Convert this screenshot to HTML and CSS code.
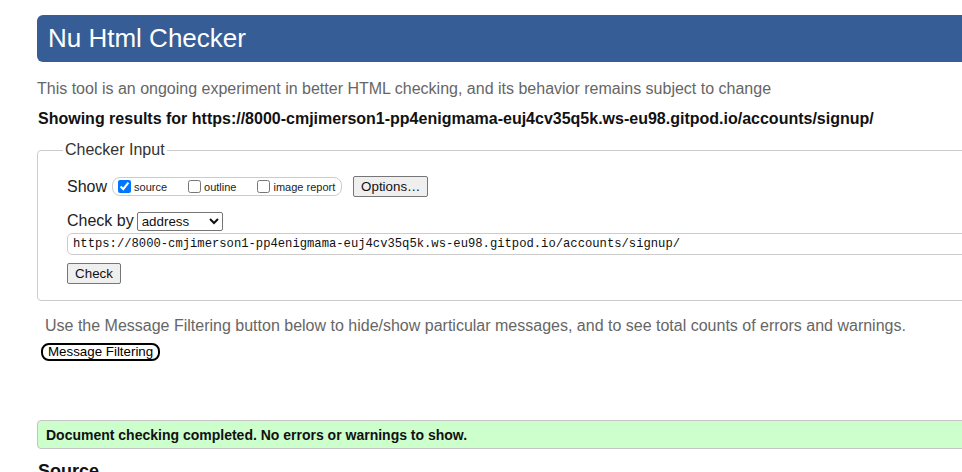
FILE: index.html
```html
<!DOCTYPE html>
<html lang="en">
<head>
<meta charset="utf-8">
<title>Nu Html Checker</title>
<link rel="stylesheet" href="styles.css">
</head>
<body>
<div class="page">
  <h1 class="banner">Nu Html Checker</h1>
  <p class="intro">This tool is an ongoing experiment in better HTML checking, and its behavior remains subject to change</p>
  <p class="results-for">Showing results for https://8000-cmjimerson1-pp4enigmama-euj4cv35q5k.ws-eu98.gitpod.io/accounts/signup/</p>
  <fieldset class="checker">
    <legend class="checker-legend">Checker Input</legend>
    <div class="checker-body">
      <div class="row show-row">
        <span class="label">Show</span>
        <span class="show-box">
          <label class="opt"><input type="checkbox" checked><span>source</span></label>
          <label class="opt"><input type="checkbox"><span>outline</span></label>
          <label class="opt"><input type="checkbox"><span>image report</span></label>
        </span>
        <button class="btn options-btn" type="button">Options…</button>
      </div>
      <div class="row checkby-row">
        <span class="label">Check by</span>
        <select class="checkby-select">
          <option>address</option>
        </select>
      </div>
      <div class="row url-row">
        <input class="url-input" type="text" value="https://8000-cmjimerson1-pp4enigmama-euj4cv35q5k.ws-eu98.gitpod.io/accounts/signup/">
      </div>
      <div class="row submit-row">
        <button class="btn check-btn" type="button">Check</button>
      </div>
    </div>
  </fieldset>
  <p class="filter-note">Use the Message Filtering button below to hide/show particular messages, and to see total counts of errors and warnings.</p>
  <button class="filter-btn" type="button">Message Filtering</button>
  <div class="success">Document checking completed. No errors or warnings to show.</div>
  <h2 class="source-head">Source</h2>
</div>
</body>
</html>
```

FILE: styles.css
```css
html, body {
  margin: 0;
  padding: 0;
  background: #fff;
  overflow: hidden;
}

body {
  font-family: "Liberation Sans", Arial, sans-serif;
  color: #111;
}

.page {
  width: 1060px;
  padding-left: 37px;
  padding-top: 15px;
}

.banner {
  margin: 0;
  height: 47px;
  display: flex;
  align-items: center;
  padding-left: 11px;
  background: #365d95;
  color: #fff;
  font-weight: normal;
  font-size: 26px;
  border-radius: 6px;
}

.intro {
  margin: 17px 0 0 0;
  font-size: 16px;
  line-height: 20px;
  color: #666;
}

.results-for {
  margin: 10px 0 0 1px;
  font-size: 16px;
  line-height: 20px;
  font-weight: bold;
  color: #111;
}

.checker {
  margin: 12px 0 0 0;
  border: 1px solid #ccc;
  border-radius: 4px;
  padding: 17px 0 16px 0;
  min-width: 0;
}

.checker-legend {
  margin-left: 25px;
  padding: 0 2px;
  font-size: 16px;
  line-height: 18px;
  color: #333;
}

.checker-body {
  padding-left: 29px;
}

.row {
  display: flex;
  align-items: center;
}

.label {
  font-size: 16px;
  color: #222;
}

.show-row {
  height: 21px;
}

.show-box {
  display: inline-flex;
  align-items: center;
  height: 17px;
  margin-left: 5px;
  padding: 0 6px 0 1px;
  border: 1px solid #ccc;
  border-radius: 8px;
}

.opt {
  display: inline-flex;
  align-items: center;
  font-size: 11px;
  color: #222;
  margin-right: 17px;
}

.opt:last-child {
  margin-right: 0;
}

.opt input {
  width: 13px;
  height: 13px;
  margin: 0 3px 0 4px;
}

.btn {
  font-family: "Liberation Sans", Arial, sans-serif;
  font-size: 13.33px;
  color: #111;
  background: #efefef;
  border: 1px solid #767676;
  border-radius: 2px;
  padding: 1px 6px;
  height: 21px;
}

.options-btn {
  margin-left: 11px;
  width: 75px;
}

.checkby-row {
  margin-top: 14px;
  height: 20px;
}

.checkby-select {
  margin-left: 3px;
  width: 86px;
  height: 19px;
  font-family: "Liberation Sans", Arial, sans-serif;
  font-size: 13.33px;
  color: #111;
  border: 1px solid #767676;
  border-radius: 2px;
  background: #fff;
}

.url-row {
  margin-top: 2px;
}

.url-input {
  width: 100%;
  height: 22px;
  box-sizing: border-box;
  border: 1px solid #ccc;
  border-radius: 5px;
  padding: 0 5px;
  font-family: "Liberation Mono", "DejaVu Sans Mono", monospace;
  font-size: 12.2px;
  color: #111;
}

.submit-row {
  margin-top: 8px;
}

.check-btn {
  width: 54px;
}

.filter-note {
  margin: 15px 0 0 8px;
  font-size: 16px;
  line-height: 20px;
  color: #666;
}

.filter-btn {
  display: block;
  margin: 7px 0 0 4px;
  height: 18px;
  padding: 0 5px;
  font-family: "Liberation Sans", Arial, sans-serif;
  font-size: 13.33px;
  line-height: 14px;
  color: #000;
  background: #fff;
  border: 2px solid #000;
  border-radius: 8px;
}

.success {
  margin-top: 59px;
  height: 29px;
  box-sizing: border-box;
  display: flex;
  align-items: center;
  padding-left: 8px;
  background: #ccffcc;
  border: 1px solid #c4c4c4;
  border-radius: 4px;
  font-size: 14px;
  font-weight: bold;
  color: #111;
}

.source-head {
  margin: 11px 0 0 1px;
  font-size: 18px;
  line-height: 22px;
  font-weight: bold;
  color: #111;
}
```
